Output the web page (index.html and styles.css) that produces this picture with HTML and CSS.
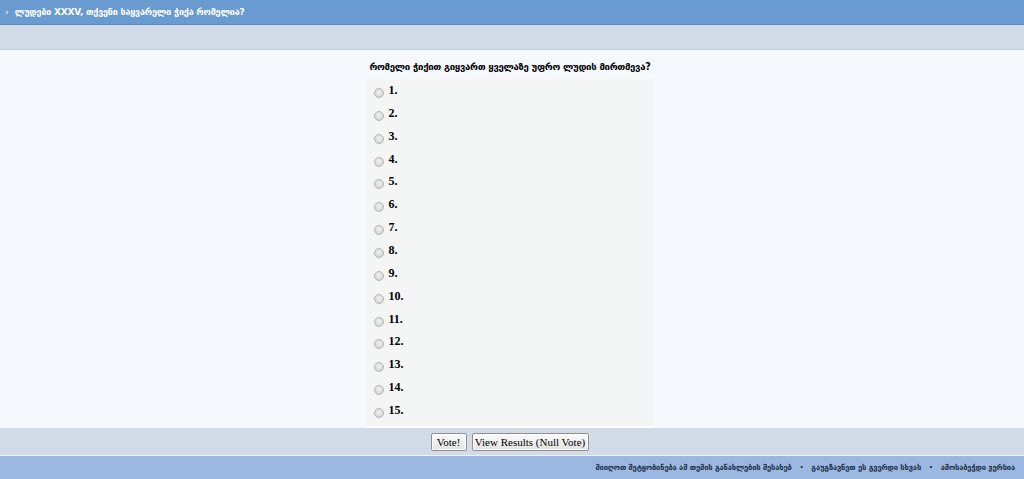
FILE: index.html
```html
<!DOCTYPE html>
<html lang="ka">
<head>
<meta charset="utf-8">
<title>Poll</title>
<link rel="stylesheet" href="styles.css">
</head>
<body>
<div class="page">
  <div class="titlebar"><span class="bullet">›</span><span class="title">ლუდები XXXV, თქვენი საყვარელი ჭიქა რომელია?</span></div>
  <div class="band"></div>
  <div class="main">
    <div class="poll">
      <div class="question">რომელი ჭიქით გიყვართ ყველაზე უფრო ლუდის მირთმევა?</div>
      <div class="options">
        <label class="opt"><input type="radio" name="v"><span>1.</span></label>
        <label class="opt"><input type="radio" name="v"><span>2.</span></label>
        <label class="opt"><input type="radio" name="v"><span>3.</span></label>
        <label class="opt"><input type="radio" name="v"><span>4.</span></label>
        <label class="opt"><input type="radio" name="v"><span>5.</span></label>
        <label class="opt"><input type="radio" name="v"><span>6.</span></label>
        <label class="opt"><input type="radio" name="v"><span>7.</span></label>
        <label class="opt"><input type="radio" name="v"><span>8.</span></label>
        <label class="opt"><input type="radio" name="v"><span>9.</span></label>
        <label class="opt"><input type="radio" name="v"><span>10.</span></label>
        <label class="opt"><input type="radio" name="v"><span>11.</span></label>
        <label class="opt"><input type="radio" name="v"><span>12.</span></label>
        <label class="opt"><input type="radio" name="v"><span>13.</span></label>
        <label class="opt"><input type="radio" name="v"><span>14.</span></label>
        <label class="opt"><input type="radio" name="v"><span>15.</span></label>
      </div>
    </div>
  </div>
  <div class="actions">
    <button class="btn btn-vote">Vote!</button>
    <button class="btn btn-results">View Results (Null Vote)</button>
  </div>
  <div class="footer">
    <span>მიიღოთ შეტყობინება ამ თემის განახლების შესახებ</span>
    <span class="dot">·</span>
    <span>გაუგზავნეთ ეს გვერდი სხვას</span>
    <span class="dot">·</span>
    <span>ამოსაბეჭდი ვერსია</span>
  </div>
</div>
</body>
</html>
```
FILE: styles.css
```css
* { box-sizing: border-box; }
html, body { margin: 0; padding: 0; }
body {
  width: 1024px;
  height: 479px;
  overflow: hidden;
  background: #f5f8fc;
  font-family: "DejaVu Sans", "Noto Sans", sans-serif;
}
.page {
  display: flex;
  flex-direction: column;
  height: 479px;
}
.titlebar {
  height: 25px;
  background: #6a9bd0;
  border-bottom: 1px solid #5b8cc4;
  display: flex;
  align-items: center;
  padding-left: 5px;
  color: #ffffff;
  font-weight: bold;
  font-size: 9px;
}
.bullet {
  font-size: 9px;
  margin-right: 6px;
  color: #dfe9f5;
}
.title { letter-spacing: -0.2px; }
.band {
  height: 25px;
  background: #d1dce8;
  border-bottom: 1px solid #c5d2e0;
}
.main {
  flex: 1;
  display: flex;
  justify-content: center;
  padding-right: 5px;
  background: #f5f8fc;
}
.poll {
  width: 288px;
  display: flex;
  flex-direction: column;
}
.question {
  height: 28px;
  padding: 11px 0 0 4px;
  font-size: 9.6px;
  font-weight: bold;
  color: #000;
  white-space: nowrap;
  letter-spacing: -0.3px;
}
.options {
  background: #f4f6f6;
  padding-top: 2px;
  flex: 1;
  border-bottom: 2px solid #ffffff;
}
.opt {
  height: 22.86px;
  display: flex;
  align-items: center;
  padding-left: 8px;
  font-family: "Liberation Serif", "Times New Roman", serif;
  font-weight: bold;
  font-size: 12px;
  color: #000;
}
.opt input {
  appearance: none;
  -webkit-appearance: none;
  width: 10px;
  height: 10px;
  margin: 3px 5px 0 0;
  border-radius: 50%;
  border: 1px solid #b4b4b4;
  background: radial-gradient(circle at 50% 40%, #f2f2f2 0%, #d8d8d8 70%, #c8c8c8 100%);
}
.opt span { position: relative; top: -1px; }
.actions {
  height: 28px;
  background: #d1dce8;
  display: flex;
  justify-content: center;
  align-items: center;
  gap: 5px;
  padding-right: 5px;
  border-bottom: 1px solid #eef3f9;
}
.btn {
  height: 18px;
  padding: 0;
  font-family: "Liberation Serif", "Times New Roman", serif;
  font-size: 11px;
  color: #000;
  border: 1px solid #8f8f8f;
  border-radius: 2px;
  background: linear-gradient(#fbfbfb, #e3e3e3);
  box-shadow: inset 0 0 0 1px #ffffff;
}
.btn-vote { width: 36px; }
.btn-results { width: 117px; }
.footer {
  height: 23px;
  background: #9bb9e0;
  display: flex;
  justify-content: flex-end;
  align-items: center;
  gap: 8px;
  padding-right: 9px;
  font-size: 7.6px;
  font-weight: bold;
  color: #1f2f4a;
  letter-spacing: -0.15px;
}
.dot { font-size: 10px; }
```
